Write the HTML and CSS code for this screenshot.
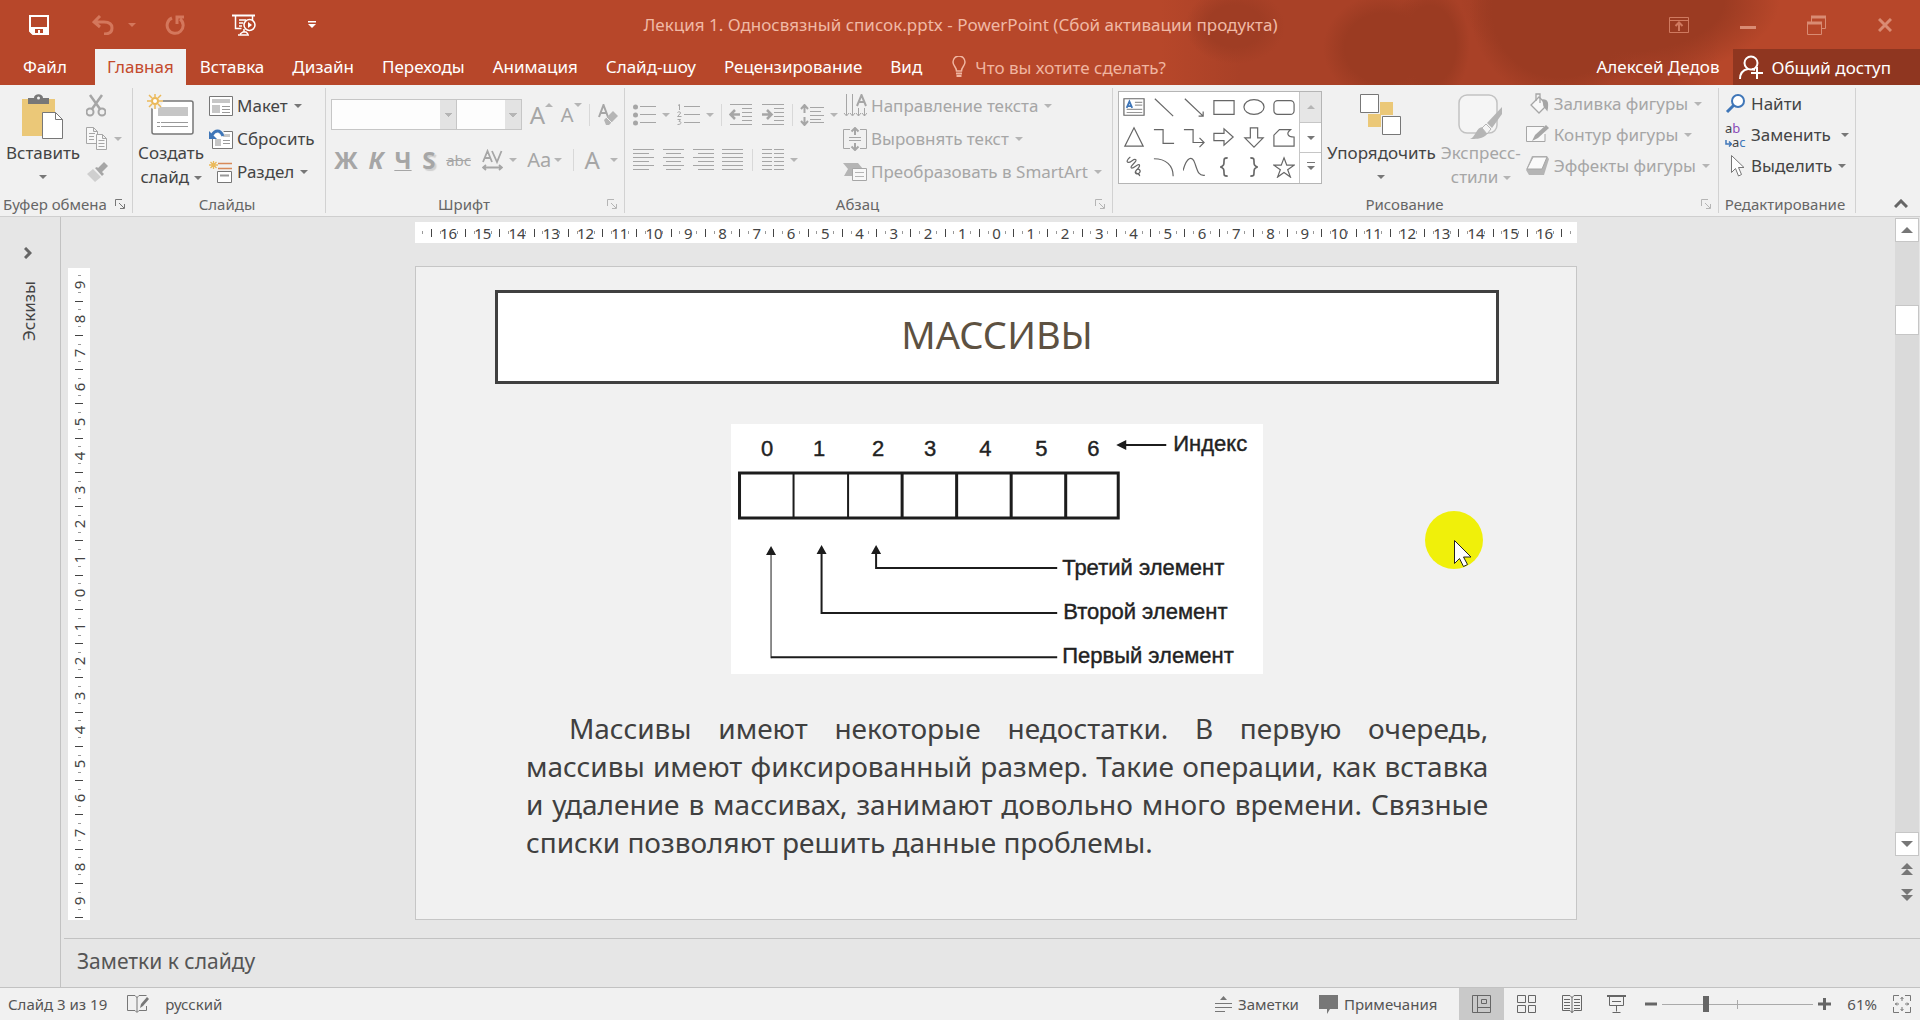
FILE: index.html
```html
<!DOCTYPE html>
<html lang="ru">
<head>
    <meta charset="UTF-8">
    <meta name="viewport" content="width=device-width, initial-scale=1.0">
    <title>Лекция 1. Односвязный список.pptx - PowerPoint</title>
    <link rel="stylesheet" href="styles.css">
</head>
<body>
    <header class="header">
        <div class="titlebar">
            <div class="quick">
                <button class="quick-button" aria-label="Сохранить">
                    <svg width="20" height="20" viewBox="0 0 20 20"><path d="M1 1h18v18H4l-3-3z" fill="none" stroke="#fff" stroke-width="2"/><path d="M1 12h18v7H3l-2-2z" fill="#fff"/><path d="M6 14h8v4h-3v-3H9v3H6z" fill="#b7472a"/></svg>
                </button>
                <button class="quick-button quick-undo" aria-label="Отменить">
                    <svg width="22" height="20" viewBox="0 0 22 20" fill="none" stroke="#d4775c" stroke-width="3"><path d="M8 1L2 7l6 5M3 7h9c5 0 8 2 8 6s-3 6-8 6"/></svg>
                    <span class="caret"></span>
                </button>
                <button class="quick-button quick-redo" aria-label="Повторить">
                    <svg width="20" height="20" viewBox="0 0 20 20" fill="none" stroke="#d4775c" stroke-width="3"><path d="M7 3a8 8 0 1 0 8 1M12 9V2h7"/></svg>
                </button>
                <button class="quick-button quick-show" aria-label="С начала">
                    <svg width="24" height="22" viewBox="0 0 24 22" fill="none" stroke="#fff" stroke-width="1.5"><path d="M0 1.5h23" stroke-width="2"/><path d="M3.5 2v12.500h6M20.500 2v4M7 6h7M7 9h4M7 12h3M12 15v3M6 21h11M8 20l3-2h3l2 2"/><circle cx="17.500" cy="11" r="5.500"/><path d="M16 8v6l4-3z" fill="#fff" stroke="none"/></svg>
                </button>
                <button class="quick-button quick-more" aria-label="Настройка панели">
                    <svg width="8" height="7" viewBox="0 0 8 7" fill="#fff"><path d="M0 0h8v1.500H0zM0 3h8L4 7z"/></svg>
                </button>
            </div>
            <div class="document-name">Лекция 1. Односвязный список.pptx - PowerPoint (Сбой активации продукта)</div>
            <div class="window-buttons">
                <button class="window-button" aria-label="Параметры ленты">
                    <svg width="20" height="16" viewBox="0 0 20 16" fill="none" stroke="#d07a60"><path d="M.5.5h19v15H.5zM.5 3.500h19"/><path d="M10 14V6M6.500 9L10 5.500 13.500 9" stroke-width="2"/></svg>
                </button>
                <button class="window-button" aria-label="Свернуть">
                    <svg width="16" height="16" viewBox="0 0 16 16"><path d="M0 9h16v3H0z" fill="#d98b73"/></svg>
                </button>
                <button class="window-button" aria-label="Окно">
                    <svg width="20" height="20" viewBox="0 0 20 20" fill="none" stroke="#d98b73"><path d="M.5 7.500h14v12H.5zM4.500 7V2.500h14v11H15"/><path d="M0 8h15M4 2h15" stroke-width="3"/></svg>
                </button>
                <button class="window-button" aria-label="Закрыть">
                    <svg width="14" height="14" viewBox="0 0 14 14" stroke="#d98b73" stroke-width="3"><path d="M1 1l12 12M13 1L1 13"/></svg>
                </button>
            </div>
        </div>
        <nav class="tabs">
            <a class="tab tab-file" href="#">Файл</a>
            <a class="tab tab-active" href="#">Главная</a>
            <a class="tab" href="#">Вставка</a>
            <a class="tab" href="#">Дизайн</a>
            <a class="tab" href="#">Переходы</a>
            <a class="tab" href="#">Анимация</a>
            <a class="tab" href="#">Слайд-шоу</a>
            <a class="tab" href="#">Рецензирование</a>
            <a class="tab" href="#">Вид</a>
            <label class="tell-me">
                <svg width="14" height="22" viewBox="0 0 14 22" fill="none" stroke="#f0b5a0" stroke-width="1.5"><path d="M4.500 15c0-4-3.500-5-3.500-9a6 6 0 0 1 12 0c0 4-3.500 5-3.500 9z"/><path d="M4 17.500h6M4.500 20h5" stroke-width="2"/></svg>
                <input class="tell-me-input" type="text" placeholder="Что вы хотите сделать?" aria-label="Что вы хотите сделать?">
            </label>
            <a class="user" href="#">Алексей Дедов</a>
            <button class="share">
                <svg width="24" height="25" viewBox="0 0 24 25" fill="none" stroke="#fff" stroke-width="2"><circle cx="12" cy="8" r="6.500"/><path d="M1 24c0-6 3-9 8-10M13 14l3 1M18 12v12M12 18h12"/></svg>
                Общий доступ
            </button>
        </nav>
    </header>

    <section class="ribbon">
        <div class="group group-clipboard">
            <div class="group-body">
                <button class="big-button">
                    <svg width="42" height="46" viewBox="0 0 42 46"><path d="M0 5h33v37H0z" fill="#ebc878"/><path d="M6 10V4h6c0-5 9-5 9 0h6v6z" fill="#777"/><circle cx="16.500" cy="4" r="1.500" fill="#f1f1f1"/><path d="M20.500 18.500h13l7 7v19h-20z" fill="#fff" stroke="#777"/><path d="M33.500 18.500v7h7" fill="none" stroke="#777"/></svg>
                    <span>Вставить</span>
                    <span class="caret"></span>
                </button>
                <div class="rows">
                    <button class="row-button" disabled aria-label="Вырезать">
                        <svg width="20" height="23" viewBox="0 0 20 23" fill="none" stroke="#a6a6a6" stroke-width="2"><circle cx="4" cy="18" r="3.500"/><circle cx="16" cy="18" r="3.500"/><path d="M4 1l10 14M16 1L6 15" stroke-width="2.500"/></svg>
                    </button>
                    <button class="row-button" disabled aria-label="Копировать">
                        <svg width="22" height="24" viewBox="0 0 22 24" fill="#f8f8f8" stroke="#a6a6a6"><path d="M.5.5h7l4 4v12H.5zM7.500.5v4h4M3 6.500h6M3 9.500h5M3 12.500h5"/><path d="M10.500 7.500h6l4 4v11h-10zM16.500 7.500v4h4M12.500 13.500h6M12.500 16.500h6M12.500 19.500h6"/></svg>
                        <span class="caret"></span>
                    </button>
                    <button class="row-button" disabled aria-label="Формат по образцу">
                        <svg width="22" height="22" viewBox="0 0 22 22"><path d="M1 13l6-5 8 8-6 5z" fill="#cfcfcf"/><path d="M9 7l7 8 2-2-2-2 6-6-4-4-6 6-1-1z" fill="#a6a6a6"/></svg>
                    </button>
                </div>
            </div>
            <div class="group-label"><span>Буфер обмена</span><svg class="launcher" width="10" height="10" viewBox="0 0 10 10" fill="none" stroke="#777"><path d="M.5 7V.5H7M4 4l5 5M9.500 5v4.500H5"/></svg></div>
        </div>

        <div class="group group-slides">
            <div class="group-body">
                <button class="big-button">
                    <svg width="48" height="46" viewBox="0 0 48 46"><rect x="5" y="7" width="41" height="33" rx="2" fill="#fff" stroke="#777" stroke-width="1.500"/><path d="M11 13h30v9H11z" fill="#c6c6c6"/><path d="M10 28.500h31M10 32.500h31" stroke="#999" stroke-dasharray="3 1 27"/><circle cx="8" cy="7" r="8" fill="#f1f1f1"/><circle cx="8" cy="7" r="3" fill="#fff" stroke="#ebb95a" stroke-width="2"/><path d="M8 0v3M8 11v4M0 7h4M12 7h4M2 1l3 3M11 10l3 3M14 1l-3 3M5 10l-3 3" stroke="#ebb95a" stroke-width="1.500"/></svg>
                    <span>Создать</span>
                    <span>слайд <i class="caret"></i></span>
                </button>
                <div class="rows">
                    <button class="row-button">
                        <svg width="24" height="20" viewBox="0 0 24 20" fill="none" stroke="#777"><path d="M.5.5h23v19H.5z" fill="#fff"/><path d="M3 3h18v4H3zM3 9h8v8H3z" fill="#c6c6c6" stroke="none"/><path d="M13 10.500h8M13 13.500h8M13 16.500h8" stroke="#999"/></svg>
                        Макет <span class="caret"></span>
                    </button>
                    <button class="row-button">
                        <svg width="24" height="20" viewBox="0 0 24 20" fill="none" stroke="#777"><path d="M3.500 2.500h20v17h-20z" fill="#fff"/><path d="M14 5h7v3h-7zM6 10h6v7H6z" fill="#c6c6c6" stroke="none"/><path d="M14 11.500h7M14 14.500h7" stroke="#999"/><path d="M2 6c3-5 9-6 12 0" stroke="#f1f1f1" stroke-width="5"/><path d="M3 6c3-5 8-6 11 1" stroke="#3f76b8" stroke-width="3"/><path d="M0 2v8h8z" fill="#3f76b8" stroke="none"/></svg>
                        Сбросить
                    </button>
                    <button class="row-button">
                        <svg width="24" height="22" viewBox="0 0 24 22" fill="none"><path d="M8.500 10.500h14v11h-14z" fill="#fff" stroke="#777"/><path d="M11 14.500h9" stroke="#999" stroke-width="2"/><path d="M9 2.500h14M9 7.500h14" stroke="#d88a5a" stroke-width="1.500"/><path d="M4.500 0v8M0 4h9M1.500 1l6 6M7.500 1l-6 6" stroke="#ebb95a" stroke-width="1.300"/></svg>
                        Раздел <span class="caret"></span>
                    </button>
                </div>
            </div>
            <div class="group-label"><span>Слайды</span></div>
        </div>

        <div class="group group-font">
            <div class="group-body tools">
                <div class="tool-row">
                    <div class="font-selects">
                        <select class="font-name" aria-label="Шрифт" disabled></select>
                        <select class="font-size" aria-label="Размер шрифта" disabled></select>
                    </div>
                    <button class="tool tool-grow" disabled>A<sup class="caret caret-up"></sup></button>
                    <button class="tool tool-shrink" disabled>A<sup class="caret"></sup></button>
                    <span class="divider"></span>
                    <button class="tool" disabled aria-label="Очистить формат">
                        <svg width="20" height="22" viewBox="0 0 20 22"><path d="M1 13L5.500 1 10 13M2.500 9h6" fill="none" stroke="#a6a6a6" stroke-width="2"/><path d="M6 16l9-9 5 5-9 9H8z" fill="#b5b5b5"/><path d="M8 13l6 6" stroke="#f1f1f1"/></svg>
                    </button>
                </div>
                <div class="tool-row">
                    <button class="tool tool-bold" disabled>Ж</button>
                    <button class="tool tool-italic" disabled>К</button>
                    <button class="tool tool-underline" disabled>Ч</button>
                    <button class="tool tool-shadow" disabled>S</button>
                    <button class="tool tool-strike" disabled>abc</button>
                    <button class="tool" disabled aria-label="Интервал">
                        <svg width="21" height="22" viewBox="0 0 21 22" fill="none" stroke="#a6a6a6" stroke-width="1.800"><path d="M1 13L5.500 2 10 13M2.500 9h6M10 2l5 11 4.500-11M2 18.500h17M4 16l-3 2.500L4 21M17 16l3 2.500-3 2.500"/></svg>
                        <span class="caret"></span>
                    </button>
                    <button class="tool tool-case" disabled>Aa<span class="caret"></span></button>
                    <span class="divider"></span>
                    <button class="tool tool-color" disabled>A<span class="caret"></span></button>
                </div>
            </div>
            <div class="group-label"><span>Шрифт</span><svg class="launcher" width="10" height="10" viewBox="0 0 10 10" fill="none" stroke="#b5b5b5"><path d="M.5 7V.5H7M4 4l5 5M9.500 5v4.500H5"/></svg></div>
        </div>

        <div class="group group-paragraph">
            <div class="group-body">
                <div class="tools">
                    <div class="tool-row">
                        <button class="tool" disabled aria-label="Маркеры">
                            <svg width="23" height="22" viewBox="0 0 23 22" fill="#a6a6a6"><circle cx="2.500" cy="3" r="2.500"/><circle cx="2.500" cy="11" r="2.500"/><circle cx="2.500" cy="19" r="2.500"/><path d="M7 2h16v1H7zM7 10h16v1H7zM7 18h16v1H7z"/></svg>
                            <span class="caret"></span>
                        </button>
                        <button class="tool" disabled aria-label="Нумерация">
                            <svg width="23" height="22" viewBox="0 0 23 22" fill="none" stroke="#a6a6a6"><path d="M7 2.500h16M7 10.500h16M7 18.500h16M1 1.500l1.500-1V6M.5 8.500c1-1 3-1 3 .5 0 1-3 3-3 3.500h4M.5 15.500h3L2 17.500c3 0 3 3-1.500 3"/></svg>
                            <span class="caret"></span>
                        </button>
                        <span class="divider"></span>
                        <button class="tool" disabled aria-label="Уменьшить отступ">
                            <svg width="24" height="22" viewBox="0 0 24 22" fill="none" stroke="#a6a6a6"><path d="M1 .5h22M13 4.500h10M13 8.500h10M13 12.500h10M13 16.500h10M1 20.500h22"/><path d="M2 10.500h9M6 6l-4.500 4.500L6 15" stroke-width="2.500"/></svg>
                        </button>
                        <button class="tool" disabled aria-label="Увеличить отступ">
                            <svg width="24" height="22" viewBox="0 0 24 22" fill="none" stroke="#a6a6a6"><path d="M1 .5h22M13 4.500h10M13 8.500h10M13 12.500h10M13 16.500h10M1 20.500h22"/><path d="M1 10.500h9M6 6l4.500 4.500L6 15" stroke-width="2.500"/></svg>
                        </button>
                        <span class="divider"></span>
                        <button class="tool" disabled aria-label="Интервал строк">
                            <svg width="24" height="22" viewBox="0 0 24 22" fill="none" stroke="#a6a6a6"><path d="M10 3.500h14M10 7.500h11M10 11.500h14M10 15.500h11M10 18.500h14"/><path d="M4.500 2v7M4.500 13v7M1 5l3.500-4L8 5M1 17l3.500 4L8 17" stroke-width="2"/></svg>
                            <span class="caret"></span>
                        </button>
                    </div>
                    <div class="tool-row tool-row-align">
                        <button class="tool" disabled aria-label="По левому краю">
                            <svg width="21" height="21" viewBox="0 0 21 21" stroke="#a6a6a6"><path d="M0 .5h21M0 4.500h16M0 8.500h21M0 12.500h16M0 16.500h21M0 20.500h16"/></svg>
                        </button>
                        <button class="tool" disabled aria-label="По центру">
                            <svg width="21" height="21" viewBox="0 0 21 21" stroke="#a6a6a6"><path d="M0 .5h21M3 4.500h15M0 8.500h21M3 12.500h15M0 16.500h21M3 20.500h15"/></svg>
                        </button>
                        <button class="tool" disabled aria-label="По правому краю">
                            <svg width="21" height="21" viewBox="0 0 21 21" stroke="#a6a6a6"><path d="M0 .5h21M5 4.500h16M0 8.500h21M5 12.500h16M0 16.500h21M5 20.500h16"/></svg>
                        </button>
                        <button class="tool" disabled aria-label="По ширине">
                            <svg width="21" height="21" viewBox="0 0 21 21" stroke="#a6a6a6"><path d="M0 .5h21M0 4.500h21M0 8.500h21M0 12.500h21M0 16.500h21M0 20.500h21"/></svg>
                        </button>
                        <span class="divider"></span>
                        <button class="tool" disabled aria-label="Колонки">
                            <svg width="22" height="21" viewBox="0 0 22 21" stroke="#a6a6a6"><path d="M0 .5h10M12 .5h10M0 4.500h10M12 4.500h10M0 8.500h10M12 8.500h10M0 12.500h10M12 12.500h10M0 16.500h10M12 16.500h10M0 20.500h10M12 20.500h10"/></svg>
                            <span class="caret"></span>
                        </button>
                    </div>
                </div>
                <div class="rows">
                    <button class="row-button" disabled>
                        <svg width="24" height="24" viewBox="0 0 24 24" fill="none" stroke="#a6a6a6"><path d="M3.500 0v21M9.500 0v21M15.500 14v8M21.500 14v8M1 19l2.500 3L6 19M7 19l2.500 3 2.500-3M13 19l2.500 3 2.500-3M19 19l2.500 3 2.500-3"/><path d="M14 12l4.500-11L23 12M15.500 8h6" stroke-width="2"/></svg>
                        Направление текста <span class="caret"></span>
                    </button>
                    <button class="row-button" disabled>
                        <svg width="24" height="24" viewBox="0 0 24 24" fill="none" stroke="#a6a6a6"><path d="M7 2.500H.5v19H7M17 2.500h6.500v19H17M6 10.500h12M6 13.500h12"/><path d="M12 1v7M12 16v7M8.500 4.500L12 1l3.500 3.500M8.500 19.500L12 23l3.500-3.500" stroke-width="2"/></svg>
                        Выровнять текст <span class="caret"></span>
                    </button>
                    <button class="row-button" disabled>
                        <svg width="24" height="20" viewBox="0 0 24 20"><path d="M0 1h15l5 6H9v7H1l4-7z" fill="#b5b5b5"/><path d="M9.500 6.500h14v12h-14z" fill="#f8f8f8" stroke="#a6a6a6"/><path d="M12 10.500h9M12 14.500h9" stroke="#b5b5b5"/></svg>
                        Преобразовать в SmartArt <span class="caret"></span>
                    </button>
                </div>
            </div>
            <div class="group-label"><span>Абзац</span><svg class="launcher" width="10" height="10" viewBox="0 0 10 10" fill="none" stroke="#b5b5b5"><path d="M.5 7V.5H7M4 4l5 5M9.500 5v4.500H5"/></svg></div>
        </div>

        <div class="group group-drawing">
            <div class="group-body">
                <div class="gallery">
                    <div class="shapes">
                        <svg viewBox="0 0 24 24"><path d="M1 3h22v18H1z"/><path d="M13 7h8M13 10h8M4 14.500h17M4 18h17" stroke="#999"/><path d="M4 13l3-7 3 7M5 11h4" stroke="#3f76b8" stroke-width="2"/></svg>
                        <svg viewBox="0 0 24 24"><path d="M2 3l20 19"/></svg>
                        <svg viewBox="0 0 24 24"><path d="M2 3l20 19M22 17v5h-5"/></svg>
                        <svg viewBox="0 0 24 24"><path d="M1 5h22v15H1z"/></svg>
                        <svg viewBox="0 0 24 24"><ellipse cx="12" cy="12" rx="11" ry="8"/></svg>
                        <svg viewBox="0 0 24 24"><rect x="1" y="5" width="22" height="15" rx="4"/></svg>
                        <svg viewBox="0 0 24 24"><path d="M12 2l10 20H2z"/></svg>
                        <svg viewBox="0 0 24 24"><path d="M1 4h10v15h12"/></svg>
                        <svg viewBox="0 0 24 24"><path d="M1 4h10v14h12M18 13l5 5-5 5"/></svg>
                        <svg viewBox="0 0 24 24"><path d="M1 8h11V3l10 9-10 9v-5H1z"/></svg>
                        <svg viewBox="0 0 24 24"><path d="M8 2v11H2l10 10 10-10h-6V2z"/></svg>
                        <svg viewBox="0 0 24 24"><path d="M7 4h12c-5 4-3 8 4 8v10H1V10z"/></svg>
                        <svg viewBox="0 0 24 24"><path d="M8 1C5 3 3 7 6 7s6-5 8-3-7 7-5 9 8-6 9-3-7 7-4 9 6-2 4-4-5 1-4 3 5 1 4 4"/></svg>
                        <svg viewBox="0 0 24 24"><path d="M1 3c13 0 21 7 21 19"/></svg>
                        <svg viewBox="0 0 24 24"><path d="M0 16C4 1 10-1 13 8s4 14 11 13"/></svg>
                        <svg viewBox="0 0 24 24"><path d="M16 2c-4 0-4 1-4 4s0 5-4 6c4 1 4 3 4 6s0 4 4 4" stroke-width="1.800"/></svg>
                        <svg viewBox="0 0 24 24"><path d="M8 2c4 0 4 1 4 4s0 5 4 6c-4 1-4 3-4 6s0 4-4 4" stroke-width="1.800"/></svg>
                        <svg viewBox="0 0 24 24"><path d="M12 2l3 8h8l-7 5 3 8-7-5-7 5 3-8-7-5h8z"/></svg>
                    </div>
                    <div class="gallery-buttons">
                        <button class="gallery-button" disabled aria-label="Вверх"><span class="caret caret-up"></span></button>
                        <button class="gallery-button" aria-label="Вниз"><span class="caret"></span></button>
                        <button class="gallery-button" aria-label="Ещё"><span class="caret caret-more"></span></button>
                    </div>
                </div>
                <button class="big-button">
                    <svg width="42" height="46" viewBox="0 0 42 46"><path d="M20 8h13v13H20zM8 20h13v13H8z" fill="#ebc878"/><path d="M.5.5h18v18H.5zM22.500 22.500h18v18h-18z" fill="#fff" stroke="#777"/></svg>
                    <span>Упорядочить</span>
                    <span class="caret"></span>
                </button>
                <button class="big-button" disabled>
                    <svg width="46" height="46" viewBox="0 0 46 46"><rect x="1" y="1" width="38" height="38" rx="8" fill="#f5f5f5" stroke="#c2c2c2" stroke-width="1.500"/><path d="M12 45c6-2 6-12 13-12 6 1 6 7 2 9-4 3-10 3-15 3z" fill="#b5b5b5"/><path d="M24 34l4-4 5 5-4 5z" fill="#f5f5f5" stroke="#b5b5b5"/><path d="M29 29l15-16v7L34 34z" fill="#b5b5b5"/></svg>
                    <span>Экспресс-</span>
                    <span>стили <i class="caret"></i></span>
                </button>
                <div class="rows rows-tight">
                    <button class="row-button" disabled>
                        <svg width="24" height="22" viewBox="0 0 24 22" fill="none" stroke="#a6a6a6" stroke-width="1.300"><path d="M13 4l8 8-8 8-8-8z" fill="#f8f8f8"/><path d="M10 8V1h4v9"/><path d="M17 7c5 0 5 4 4 10l-3-4z" fill="#a6a6a6"/></svg>
                        Заливка фигуры <span class="caret"></span>
                    </button>
                    <button class="row-button" disabled>
                        <svg width="24" height="20" viewBox="0 0 24 20"><path d="M19 9v7.500H.5V1.500H18" fill="#f8f8f8" stroke="#a6a6a6"/><path d="M6 16l3-6L20 0l3 3-11 10z" fill="#a6a6a6"/></svg>
                        Контур фигуры <span class="caret"></span>
                    </button>
                    <button class="row-button" disabled>
                        <svg width="24" height="22" viewBox="0 0 24 22"><path d="M6 1h15l2 3-5 16H3l-3-5z" fill="#b5b5b5"/><path d="M7 2h14l-5 12H1z" fill="#fafafa" stroke="#a6a6a6"/></svg>
                        Эффекты фигуры <span class="caret"></span>
                    </button>
                </div>
            </div>
            <div class="group-label"><span>Рисование</span><svg class="launcher" width="10" height="10" viewBox="0 0 10 10" fill="none" stroke="#b5b5b5"><path d="M.5 7V.5H7M4 4l5 5M9.500 5v4.500H5"/></svg></div>
        </div>

        <div class="group group-editing">
            <div class="group-body">
                <div class="rows rows-tight">
                    <button class="row-button">
                        <svg width="22" height="20" viewBox="0 0 22 20" fill="none" stroke="#3f76b8"><circle cx="13" cy="7" r="6" fill="#fff" stroke-width="2"/><path d="M8.500 11.500L2 18" stroke-width="3"/></svg>
                        Найти
                    </button>
                    <button class="row-button">
                        <span class="replace-icon">
                            <span>a<b class="violet">b</b></span>
                            <span><svg width="7" height="7" viewBox="0 0 7 7" fill="none" stroke="#3f76b8" stroke-width="1.500"><path d="M1 0v4h5M4 1.500L6.500 4 4 6.500"/></svg>a<b class="blue">c</b></span>
                        </span>
                        Заменить <span class="caret caret-far"></span>
                    </button>
                    <button class="row-button">
                        <svg width="22" height="22" viewBox="0 0 22 22"><path d="M6.500.5v17l4-4 3 7.500 3-1.500-3-7h5.500z" fill="#fff" stroke="#777"/></svg>
                        Выделить <span class="caret"></span>
                    </button>
                </div>
            </div>
            <div class="group-label"><span>Редактирование</span></div>
        </div>
        <button class="collapse" aria-label="Свернуть ленту">
            <svg width="14" height="9" viewBox="0 0 14 9" fill="none" stroke="#666" stroke-width="3"><path d="M1 8l6-6 6 6"/></svg>
        </button>
    </section>

    <div class="workspace">
        <aside class="thumbnails">
            <button class="thumbnails-button" aria-label="Показать эскизы">
                <svg width="8" height="12" viewBox="0 0 8 12" fill="none" stroke="#666" stroke-width="3"><path d="M1 1l5 5-5 5"/></svg>
            </button>
            <span class="thumbnails-label">Эскизы</span>
        </aside>
        <div class="main">
            <div class="editor">
                <div class="canvas">
                    <div class="ruler ruler-top"></div>
                    <div class="ruler ruler-left"></div>
                    <article class="slide">
                        <h1 class="slide-title">МАССИВЫ</h1>
                        <svg class="figure" viewBox="0 0 532 250">
                            <rect width="532" height="250" fill="#fff"/>
                            <g fill="none" stroke="#1c1c1c" stroke-width="3">
                                <path d="M8.500 49H387v45H8.500zM171 49v45M225.500 49v45M280 49v45M334.500 49v45"/>
                                <path d="M62.500 49v45M117 49v45M90.500 130v59H326M145 130v14H326M40 233H326M394 21h41" stroke-width="2"/>
                                <path d="M40 130v104" stroke-width="1"/>
                            </g>
                            <path d="M40 122l5 9H35zM90.500 121l5 9h-10zM145 121l5 9h-10zM385 21l10-5v10z" fill="#1c1c1c"/>
                            <g class="figure-text">
                                <text x="30" y="32">0</text>
                                <text x="82" y="32">1</text>
                                <text x="141" y="32">2</text>
                                <text x="193" y="32">3</text>
                                <text x="248" y="32">4</text>
                                <text x="304" y="32">5</text>
                                <text x="356" y="32">6</text>
                                <text x="442" y="27">Индекс</text>
                                <text x="331" y="151">Третий элемент</text>
                                <text x="332" y="195">Второй элемент</text>
                                <text x="331" y="239">Первый элемент</text>
                            </g>
                        </svg>
                        <p class="slide-text">Массивы имеют некоторые недостатки. В первую очередь, массивы имеют фиксированный размер. Такие операции, как вставка и удаление в массивах, занимают довольно много времени. Связные списки позволяют решить данные проблемы.</p>
                        <div class="pointer">
                            <svg width="18" height="27" viewBox="0 0 18 27"><path d="M.5.5v23l5-5 4 8 4-2-4-7.500h7.500z" fill="#fff" stroke="#222"/></svg>
                        </div>
                    </article>
                </div>
                <div class="scrollbar">
                    <button class="scroll-button" aria-label="Прокрутить вверх"><span class="arrow arrow-up"></span></button>
                    <div class="scroll-track"><div class="scroll-thumb"></div></div>
                    <button class="scroll-button" aria-label="Прокрутить вниз"><span class="arrow"></span></button>
                    <button class="slide-jump" aria-label="Предыдущий слайд"><span class="arrow arrow-up"></span><span class="arrow arrow-up"></span></button>
                    <button class="slide-jump" aria-label="Следующий слайд"><span class="arrow"></span><span class="arrow"></span></button>
                </div>
            </div>
            <div class="notes">Заметки к слайду</div>
        </div>
    </div>

    <footer class="status">
        <span class="status-text">Слайд 3 из 19</span>
        <button class="status-button spelling" aria-label="Правописание">
            <svg width="22" height="18" viewBox="0 0 22 18" fill="none" stroke="#777"><path d="M10 2.500L8 .5H.5v15H8l2 2 2-2h7.500V11M10 2v15M10 2.500l2-2h7.500"/><path d="M13 13l1-4 6-7 2 2-6 7z" fill="#777" stroke="none"/></svg>
        </button>
        <span class="status-text">русский</span>
        <div class="status-right">
            <button class="status-button">
                <svg width="17" height="18" viewBox="0 0 17 18" fill="#777"><path d="M5 5l3.500-4L12 5zM0 8h17v1H0zM0 12h17v1H0zM0 16h10v1H0z"/></svg>
                Заметки
            </button>
            <button class="status-button status-comments">
                <svg width="19" height="19" viewBox="0 0 19 19" fill="#777"><path d="M0 0h19v14h-8l-3 5v-5H0z"/></svg>
                Примечания
            </button>
            <div class="views">
                <button class="view view-active" aria-label="Обычный">
                    <svg width="20" height="18" viewBox="0 0 20 18" fill="none" stroke="#666"><path d="M.5.5h18v17H.5zM5.500.5v17M5.500 12.500h13M9.500 4.500h5v4h-5z"/></svg>
                </button>
                <button class="view" aria-label="Сортировщик">
                    <svg width="20" height="18" viewBox="0 0 20 18" fill="none" stroke="#666"><path d="M.5.500h8v7h-8zM11.500.5h7v7h-7zM.5 10.500h8v7h-8zM11.500 10.500h7v7h-7z"/></svg>
                </button>
                <button class="view" aria-label="Чтение">
                    <svg width="20" height="18" viewBox="0 0 20 18" fill="none" stroke="#666"><path d="M10 2.500L8 .5H.5v15H8l2 2 2-2h7.500V.5H12zM10 2v16M2 4.500h6M2 7.500h6M2 10.500h6M2 13.500h6M12 4.500h6M12 7.500h6M12 10.500h6M12 13.500h6"/></svg>
                </button>
                <button class="view" aria-label="Слайд-шоу">
                    <svg width="20" height="18" viewBox="0 0 20 18" fill="none" stroke="#666"><path d="M0 1h19" stroke-width="2"/><path d="M2.500 2v8.500h14V2M5 6.500h9M9.500 10.500v6M5.500 17.500h8"/></svg>
                </button>
            </div>
            <div class="zoom">
                <button class="zoom-button" aria-label="Уменьшить"><svg width="12" height="12" viewBox="0 0 12 12"><path d="M0 4.500h12v3H0z" fill="#666"/></svg></button>
                <input class="zoom-range" type="range" min="0" max="100" value="28" aria-label="Масштаб">
                <button class="zoom-button" aria-label="Увеличить"><svg width="13" height="12" viewBox="0 0 13 12"><path d="M0 4.500h13v3H0zM5 0h3v12H5z" fill="#666"/></svg></button>
            </div>
            <span class="zoom-value">61%</span>
            <button class="status-button" aria-label="По размеру окна">
                <svg width="18" height="18" viewBox="0 0 18 18" fill="none" stroke="#777"><path d="M6 .5H.5V6M12 .5h5.500V6M.5 12v5.500H6M17.500 12v5.500H12M9 2v4M9 12v4M2 9h4M12 9h4M7.500 4L9 2.500 10.500 4M7.500 14L9 15.500l1.500-1.500M4 7.500L2.500 9 4 10.500M14 7.500L15.500 9 14 10.500"/></svg>
            </button>
        </div>
    </footer>

    <script>
        const topRuler = document.getElementsByClassName("ruler-top")[0];
        const leftRuler = document.getElementsByClassName("ruler-left")[0];

        function addMark(ruler, className, text) {
            const mark = document.createElement("span");
            mark.className = className;
            mark.textContent = text;
            ruler.appendChild(mark);
        }

        function addNumber(ruler, number) {
            addMark(ruler, "mark dot", "");
            addMark(ruler, "mark", Math.abs(number));
            addMark(ruler, "mark dot", "");
            addMark(ruler, "mark tick", "");
        }

        addMark(topRuler, "mark dot", "");
        addMark(topRuler, "mark tick", "");
        for (let i = -16; i <= 16; i++) {
            addNumber(topRuler, i);
        }
        addMark(topRuler, "mark dot", "");

        for (let i = -9; i <= 9; i++) {
            addNumber(leftRuler, i);
        }
    </script>
</body>
</html>
```
FILE: styles.css
```css
* {
    box-sizing: border-box;
}
body {
    margin: 0;
    height: 100vh;
    display: flex;
    flex-direction: column;
    overflow: hidden;
    background-color: #e6e6e6;
    color: #444;
    font-family: "Noto Sans", "Open Sans", sans-serif;
    font-size: 17px;
}
button {
    padding: 0;
    background: none;
    border: 0;
    color: inherit;
    font: inherit;
    white-space: nowrap;
}
button:disabled {
    color: #a6a6a6;
}
svg {
    flex: none;
}

.caret {
    display: inline-block;
    flex: none;
    border: 4px solid transparent;
    border-top-color: #777;
    border-bottom: 0;
}
.caret-up {
    border-top: 0;
    border-bottom: 4px solid #777;
}
.caret-more {
    position: relative;
}
.caret-more::before {
    content: "";
    position: absolute;
    left: -4px;
    top: -8px;
    width: 8px;
    height: 1px;
    background-color: #777;
}
button:disabled .caret {
    border-top-color: #b5b5b5;
}
button:disabled .caret-up {
    border-bottom-color: #b5b5b5;
}

/* title bar and tabs */
.header {
    background-color: #b7472a;
    background-image:
        radial-gradient(ellipse 90px 90px at calc(100% - 360px) 10px, #9b3b22 75%, transparent),
        radial-gradient(ellipse 160px 80px at calc(100% - 300px) 0, #9b3b22 65%, transparent),
        radial-gradient(ellipse 62px 54px at calc(100% - 535px) 48px, #9b3b22 65%, transparent),
        radial-gradient(ellipse 40px 60px at calc(100% - 490px) 45px, #9b3b22 65%, transparent),
        radial-gradient(ellipse 50px 38px at calc(100% - 685px) 26px, #9f3d24 55%, transparent),
        linear-gradient(to right, transparent calc(100% - 760px), #a94127 calc(100% - 680px), #a94127 calc(100% - 250px), #b7472a calc(100% - 200px));
    color: #fff;
}
.titlebar {
    height: 49px;
    display: flex;
    align-items: center;
    justify-content: space-between;
}
.quick,
.window-buttons {
    flex: 1;
    display: flex;
    align-items: center;
}
.quick {
    padding-left: 29px;
}
.quick-button {
    display: flex;
    align-items: center;
}
.quick-undo {
    margin-left: 43px;
    gap: 14px;
}
.quick-redo {
    margin-left: 29px;
}
.quick-show {
    margin-left: 47px;
}
.quick-more {
    margin-left: 52px;
}
.quick-undo .caret {
    border-top-color: #d4775c;
}
.document-name {
    color: #f0b9a5;
}
.window-buttons {
    justify-content: flex-end;
    gap: 51px;
    padding-right: 28px;
}
.window-button {
    display: flex;
}

.tabs {
    height: 36px;
    display: flex;
    align-items: stretch;
}
.tab,
.user {
    display: flex;
    align-items: center;
    padding: 0 14px;
    color: #fff;
    line-height: 24px;
    text-decoration: none;
}
.tab-file {
    padding: 0 28px 0 23px;
}
.tab-active {
    padding: 0 12px;
    background-color: #f1f1f1;
    color: #c44a2c;
}
.tell-me {
    flex: 1;
    display: flex;
    align-items: center;
    gap: 9px;
    padding-left: 16px;
}
.tell-me-input {
    flex: 1;
    padding: 0;
    background: none;
    border: 0;
    outline: none;
    font: inherit;
}
.tell-me-input::placeholder {
    color: #f0b5a0;
    opacity: 1;
}
.share {
    display: flex;
    align-items: center;
    gap: 8px;
    padding: 0 29px 0 6px;
    background-color: #8f3620;
}

/* ribbon */
.ribbon {
    height: 132px;
    display: flex;
    background-color: #f1f1f1;
    border-bottom: 1px solid #cfcfcf;
}
.group {
    display: flex;
    flex-direction: column;
    margin: 3px 0;
    border-right: 1px solid #d2d2d2;
}
.group-clipboard {
    width: 133px;
}
.group-slides {
    width: 193px;
}
.group-font {
    width: 299px;
}
.group-paragraph {
    width: 488px;
}
.group-drawing {
    width: 606px;
}
.group-editing {
    width: 137px;
}
.group-body {
    flex: 1;
    display: flex;
    align-items: flex-start;
}
.group-label {
    display: flex;
    align-items: center;
    gap: 8px;
    height: 20px;
    padding: 1px 7px 0 3px;
    color: #666;
    font-size: 15px;
    white-space: nowrap;
}
.group-label span {
    flex: 1;
    text-align: center;
}

.big-button {
    display: flex;
    flex-direction: column;
    align-items: center;
    padding-top: 6px;
}
.big-button span {
    line-height: 24px;
}
.big-button > svg {
    margin-bottom: 1px;
}
.big-button > .caret {
    margin-top: 10px;
}
.big-button i {
    vertical-align: middle;
}
.rows {
    display: flex;
    flex-direction: column;
    padding-top: 1px;
}
.row-button {
    height: 33px;
    display: flex;
    align-items: center;
    gap: 4px;
}
.rows-tight {
    padding-top: 0;
}
.rows-tight .row-button {
    height: 31px;
}
.row-button .caret {
    margin: 0 4px 0 2px;
}
.group-clipboard .group-body {
    gap: 6px;
    padding-left: 6px;
}
.group-slides .group-body {
    gap: 5px;
    padding-left: 5px;
}

.tools {
    display: flex;
    flex-direction: column;
    align-items: stretch;
}
.group-font .tools {
    padding: 0 6px 0 5px;
}
.tool-row {
    height: 45px;
    display: flex;
    align-items: center;
    justify-content: space-between;
    padding-top: 8px;
}
.group-font .tool-row + .tool-row {
    padding-left: 3px;
}
.group-paragraph .tools {
    width: 205px;
}
.group-paragraph .group-body {
    gap: 5px;
    padding-left: 8px;
}
.tool-row-align {
    width: 165px;
}
.tool {
    display: flex;
    align-items: center;
    gap: 6px;
    font-size: 20px;
    line-height: 24px;
}
.divider {
    width: 1px;
    height: 22px;
    background-color: #d8d8d8;
}
.font-selects {
    display: flex;
}
.font-name,
.font-size {
    appearance: none;
    height: 31px;
    background:
        conic-gradient(from -45deg at 50% 100%, #b5b5b5 90deg, transparent 0) right 4px center / 8px 4px no-repeat,
        linear-gradient(to right, #fdfdfd calc(100% - 16px), #e3e3e3 0);
    border: 1px solid #c6c6c6;
    border-radius: 0;
    opacity: 1;
}
.font-name {
    width: 126px;
}
.font-size {
    width: 65px;
    border-left: 0;
}
.tool-grow,
.tool-shrink {
    gap: 0;
}
.tool-grow .caret,
.tool-shrink .caret {
    align-self: flex-start;
}
.tool-grow,
.tool-bold,
.tool-italic,
.tool-underline,
.tool-shadow,
.tool-color {
    font-size: 24px;
}
.tool-bold,
.tool-italic,
.tool-underline,
.tool-shadow {
    font-weight: bold;
}
.tool-italic {
    font-style: italic;
}
.tool-underline {
    text-decoration: underline;
    text-decoration-thickness: 1px;
}
.tool-shadow {
    text-shadow: 2px 2px 1px #d0d0d0;
}
.tool-strike {
    text-decoration: line-through;
    font-size: 15px;
}
.tool-case {
    gap: 3px;
}
.tool-color {
    gap: 10px;
}

.group-drawing .group-body {
    padding-left: 5px;
}
.gallery {
    display: flex;
    height: 93px;
    margin-top: 3px;
    background-color: #fff;
    border: 1px solid #b5b5b5;
}
.shapes {
    display: grid;
    grid-template-columns: repeat(6, 30px);
    grid-auto-rows: 30px;
    place-items: center;
}
.shapes svg {
    width: 22px;
    height: 22px;
    fill: none;
    stroke: #666;
    stroke-width: 1.3px;
}
.gallery-buttons {
    width: 22px;
    display: flex;
    flex-direction: column;
    border-left: 1px solid #c6c6c6;
}
.gallery-button {
    flex: 1;
    display: flex;
    align-items: center;
    justify-content: center;
}
.gallery-button + .gallery-button {
    border-top: 1px solid #c6c6c6;
}
.gallery-button:disabled {
    background-color: #e6e6e6;
}
.group-drawing .big-button {
    margin-left: 5px;
}
.group-drawing .rows {
    margin-left: 5px;
}
.group-editing .group-body {
    padding-left: 6px;
}
.replace-icon {
    width: 22px;
    display: flex;
    flex-direction: column;
    line-height: 14px;
    font-size: 13px;
    text-align: left;
}
.replace-icon b {
    font-weight: normal;
}
.replace-icon .violet {
    color: #8a4bb8;
}
.replace-icon .blue {
    color: #3f76b8;
}
.row-button .caret-far {
    margin-left: 6px;
}
.collapse {
    margin: auto 12px 8px auto;
    display: flex;
}

/* slide area */
.workspace {
    flex: 1;
    min-height: 0;
    display: flex;
}
.thumbnails {
    flex: none;
    width: 61px;
    display: flex;
    flex-direction: column;
    align-items: center;
    gap: 22px;
    padding: 30px 4px 0 0;
    border-right: 1px solid #c2c2c2;
}
.thumbnails-button {
    display: flex;
}
.thumbnails-label {
    writing-mode: vertical-rl;
    transform: rotate(180deg);
}
.main {
    flex: 1;
    min-width: 0;
    display: flex;
    flex-direction: column;
}
.editor {
    flex: 1;
    min-height: 0;
    display: flex;
}
.canvas {
    flex: 1;
    min-width: 0;
    display: grid;
    grid-template-columns: 22px minmax(0, 1fr);
    grid-template-rows: 21px auto;
    row-gap: 23px;
    align-content: start;
    padding: 5px 0 0 7px;
}
.ruler {
    display: flex;
    align-items: center;
    justify-content: space-between;
    background-color: #fff;
    font-size: 15px;
}
.ruler-top,
.slide {
    grid-column: 2;
    width: 64.4%;
    margin-left: 18%;
}
.ruler-top {
    padding: 0 6px 0 8px;
}
.ruler-left {
    grid-column: 1;
    flex-direction: column;
    margin-top: 2px;
    padding: 8px 0 1px;
}
.mark {
    width: 0;
    height: 0;
    display: flex;
    align-items: center;
    justify-content: center;
}
.ruler-left .mark {
    transform: rotate(-90deg);
}
.tick::before,
.dot::before {
    content: "";
    flex: none;
    width: 1px;
    height: 8px;
    background-color: #444;
}
.dot::before {
    height: 3px;
    background-color: #999;
}
.slide {
    position: relative;
    aspect-ratio: 16 / 9;
    display: flex;
    flex-direction: column;
    padding: 23px 77px 0 79px;
    background-color: #f1f1f1;
    border: 1px solid #c6c6c6;
}
.slide-title {
    margin: 0;
    padding: 16px 0 22px;
    background-color: #fff;
    border: 3px solid #404040;
    color: #5d5141;
    font-size: 38px;
    font-weight: normal;
    line-height: 50px;
    text-align: center;
}
.figure {
    align-self: center;
    width: 53%;
    margin-top: 40px;
}
.figure-text {
    fill: #222;
    stroke: #222;
    stroke-width: 0.4px;
    font-family: "Liberation Sans", sans-serif;
    font-size: 22px;
}
.slide-text {
    margin: 35px 11px 0 31px;
    color: #404040;
    font-size: 28px;
    line-height: 38px;
    text-align: justify;
    text-indent: 43px;
}
/* highlighted mouse pointer over the slide */
.pointer {
    position: absolute;
    left: 87%;
    top: 37.5%;
    width: 58px;
    height: 58px;
    padding: 29px 0 0 29px;
    background-color: #f0f00a;
    border-radius: 50%;
}

.scrollbar {
    flex: none;
    width: 25px;
    display: flex;
    flex-direction: column;
    padding: 1px 1px 30px 0;
}
.scroll-button {
    height: 24px;
    display: flex;
    align-items: center;
    justify-content: center;
    background-color: #fff;
    border: 1px solid #c6c6c6;
}
.scroll-track {
    flex: 1;
    padding-top: 63px;
    background-color: #dadada;
}
.scroll-thumb {
    height: 30px;
    background-color: #fff;
    border: 1px solid #c6c6c6;
}
.slide-jump {
    height: 26px;
    display: flex;
    flex-direction: column;
    align-items: center;
    justify-content: center;
}
.arrow {
    border: 6px solid transparent;
    border-top-color: #777;
    border-bottom: 0;
}
.arrow-up {
    border-top: 0;
    border-bottom: 6px solid #777;
}
.notes {
    height: 49px;
    margin-left: 3px;
    padding-left: 13px;
    border-top: 1px solid #c2c2c2;
    color: #555;
    font-size: 21px;
    line-height: 45px;
}

/* status bar */
.status {
    height: 33px;
    display: flex;
    align-items: center;
    padding: 0 9px 0 8px;
    background-color: #f1f1f1;
    border-top: 1px solid #c2c2c2;
    color: #555;
    font-size: 15px;
    line-height: 20px;
}
.status-button {
    display: flex;
    align-items: center;
    gap: 6px;
}
.spelling {
    margin: 0 16px 0 20px;
}
.status-right {
    align-self: stretch;
    display: flex;
    align-items: center;
    margin-left: auto;
}
.status-comments {
    margin: 0 22px 0 20px;
}
.views {
    align-self: stretch;
    display: flex;
}
.view {
    width: 45px;
    display: flex;
    align-items: center;
    justify-content: center;
}
.view-active {
    background-color: #c9c9c9;
}
.zoom {
    display: flex;
    align-items: center;
    gap: 5px;
    margin: 0 16px 0 6px;
}
.zoom-button {
    display: flex;
}
.zoom-range {
    appearance: none;
    width: 151px;
    height: 16px;
    margin: 0;
    background:
        linear-gradient(#aaa, #aaa) center / 100% 1px no-repeat,
        linear-gradient(#aaa, #aaa) center / 1px 9px no-repeat;
}
.zoom-range::-webkit-slider-thumb {
    appearance: none;
    width: 6px;
    height: 16px;
    background-color: #666;
}
.zoom-value {
    margin-right: 16px;
}
```
